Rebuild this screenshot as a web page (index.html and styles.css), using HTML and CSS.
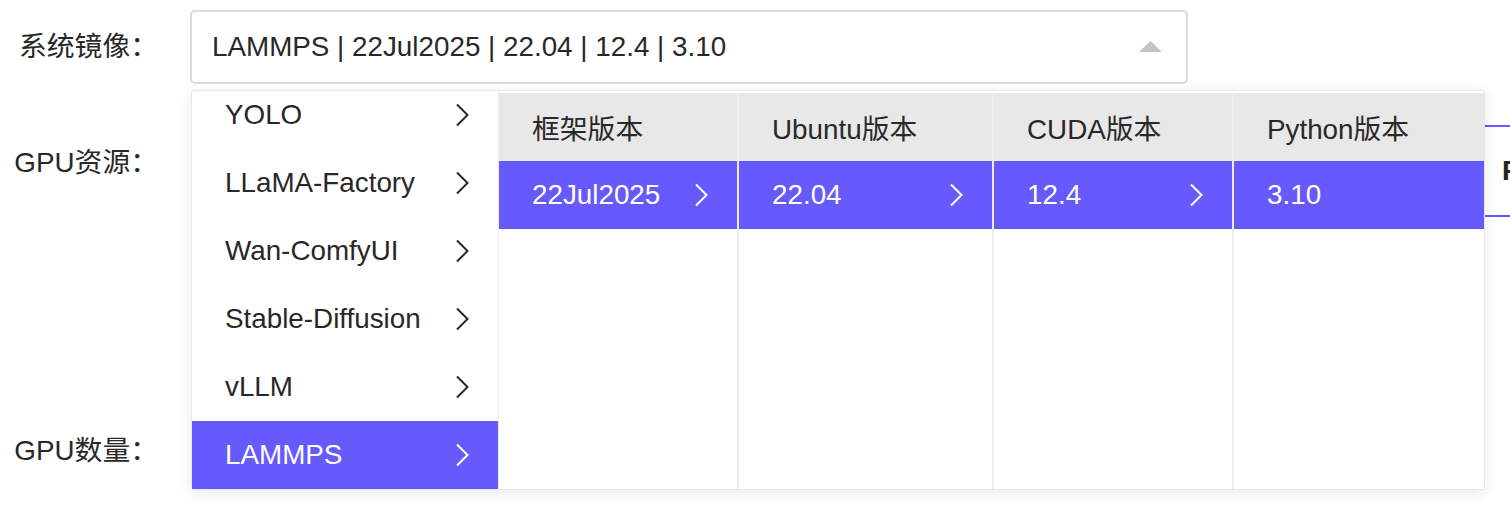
FILE: index.html
```html
<!DOCTYPE html>
<html lang="zh-CN">
<head>
<meta charset="utf-8">
<title>系统镜像</title>
<link rel="stylesheet" href="styles.css">
</head>
<body>
<div class="page">
  <div class="form-row row-image">
    <label class="label">系统镜像：</label>
    <div class="select-wrap">
      <div class="select">
        <span class="select-value">LAMMPS | 22Jul2025 | 22.04 | 12.4 | 3.10</span>
        <svg class="caret" width="23" height="11" viewBox="0 0 23 11"><polygon points="0,11 11.5,0 23,11"/></svg>
      </div>
      <div class="dropdown">
        <div class="menu">
          <div class="menu-item"><span>YOLO</span><svg class="chev" width="14" height="24" viewBox="0 0 14 24"><path d="M2 1.5 L12.5 12 L2 22.5"/></svg></div>
          <div class="menu-item"><span>LLaMA-Factory</span><svg class="chev" width="14" height="24" viewBox="0 0 14 24"><path d="M2 1.5 L12.5 12 L2 22.5"/></svg></div>
          <div class="menu-item"><span>Wan-ComfyUI</span><svg class="chev" width="14" height="24" viewBox="0 0 14 24"><path d="M2 1.5 L12.5 12 L2 22.5"/></svg></div>
          <div class="menu-item"><span>Stable-Diffusion</span><svg class="chev" width="14" height="24" viewBox="0 0 14 24"><path d="M2 1.5 L12.5 12 L2 22.5"/></svg></div>
          <div class="menu-item"><span>vLLM</span><svg class="chev" width="14" height="24" viewBox="0 0 14 24"><path d="M2 1.5 L12.5 12 L2 22.5"/></svg></div>
          <div class="menu-item active"><span>LAMMPS</span><svg class="chev" width="14" height="24" viewBox="0 0 14 24"><path d="M2 1.5 L12.5 12 L2 22.5"/></svg></div>
        </div>
        <div class="versions">
          <div class="vcol c1">
            <div class="vhead">框架版本</div>
            <div class="vcell active"><span>22Jul2025</span><svg class="chev" width="14" height="24" viewBox="0 0 14 24"><path d="M2 1.5 L12.5 12 L2 22.5"/></svg></div>
          </div>
          <div class="vcol c2">
            <div class="vhead">Ubuntu版本</div>
            <div class="vcell active"><span>22.04</span><svg class="chev" width="14" height="24" viewBox="0 0 14 24"><path d="M2 1.5 L12.5 12 L2 22.5"/></svg></div>
          </div>
          <div class="vcol c3">
            <div class="vhead">CUDA版本</div>
            <div class="vcell active"><span>12.4</span><svg class="chev" width="14" height="24" viewBox="0 0 14 24"><path d="M2 1.5 L12.5 12 L2 22.5"/></svg></div>
          </div>
          <div class="vcol c4">
            <div class="vhead">Python版本</div>
            <div class="vcell active"><span>3.10</span></div>
          </div>
        </div>
      </div>
    </div>
  </div>

  <div class="form-row row-gpu">
    <label class="label">GPU资源：</label>
    <div class="cards">
      <div class="card"></div>
      <div class="card"></div>
      <div class="card"></div>
      <div class="card"></div>
      <div class="card card-active">FP32</div>
    </div>
  </div>

  <div class="form-row row-count">
    <label class="label">GPU数量：</label>
    <div class="count"></div>
  </div>
</div>
</body>
</html>
```

FILE: styles.css
```css
html, body {
  margin: 0;
  padding: 0;
  background: #ffffff;
}

body {
  width: 1510px;
  height: 508px;
  overflow: hidden;
  font-family: "Liberation Sans", "Noto Sans CJK SC", sans-serif;
  font-size: 27.8px;
  color: #282828;
}

.page {
  padding-top: 10px;
}

.form-row {
  display: grid;
  grid-template-columns: 158px 1fr;
  column-gap: 32px;
  align-items: center;
}

.label {
  text-align: right;
  line-height: 40px;
  white-space: nowrap;
}

/* select */
.select-wrap {
  position: relative;
  width: 998px;
}

.select {
  box-sizing: border-box;
  height: 74px;
  border: 2px solid #dcdcdc;
  border-radius: 5px;
  display: flex;
  align-items: center;
  justify-content: space-between;
  padding: 0 24px 0 20px;
  background: #fff;
}

.select-value {
  white-space: nowrap;
}

.caret {
  fill: #c4c4c4;
  margin-top: -2px;
}

/* dropdown overlay */
.dropdown {
  position: absolute;
  top: calc(100% + 6px);
  left: 1px;
  width: 1294px;
  height: 400px;
  box-sizing: border-box;
  border: 1px solid #e8e8e8;
  border-radius: 3px;
  background: #fff;
  box-shadow: 0 3px 16px rgba(0, 0, 0, 0.09);
  display: flex;
  z-index: 10;
}

.menu {
  width: 306px;
  flex: 0 0 306px;
  border-right: 1px solid #ececec;
  display: flex;
  flex-direction: column;
  justify-content: flex-end;
  overflow: hidden;
}

.menu-item {
  flex: 0 0 68px;
  height: 68px;
  display: flex;
  align-items: center;
  justify-content: space-between;
  padding: 0 29px 0 33px;
  white-space: nowrap;
}

.menu-item.active {
  background: #675afc;
  color: #ffffff;
}

.chev {
  flex: 0 0 auto;
  fill: none;
  stroke: currentColor;
  stroke-width: 2;
}

.versions {
  flex: 1;
  display: flex;
  padding-top: 2px;
}

.vcol {
  box-sizing: border-box;
  border-right: 2px solid #eeeeee;
  display: flex;
  flex-direction: column;
}

.c1 { width: 240px; }
.c2 { width: 255px; }
.c3 { width: 240px; }
.c4 { flex: 1; border-right: none; }

.vhead {
  height: 68px;
  background: #e8e8e8;
  display: flex;
  align-items: center;
  padding-left: 33px;
  white-space: nowrap;
}

.vcell {
  height: 68px;
  display: flex;
  align-items: center;
  justify-content: space-between;
  padding: 0 29px 0 33px;
  white-space: nowrap;
}

.vcell.active {
  background: #675afc;
  color: #ffffff;
}

/* gpu resources */
.row-gpu {
  margin-top: 41px;
  align-items: start;
}

.row-gpu .label {
  margin-top: 18px;
}

.cards {
  display: flex;
  gap: 20.5px;
  margin-left: 6px;
}

.card {
  flex: 0 0 300px;
  box-sizing: border-box;
  height: 92px;
  border: 2px solid #e2e2e2;
  border-radius: 4px;
  padding-left: 22px;
  display: flex;
  align-items: center;
  font-weight: bold;
  color: #222;
  white-space: nowrap;
}

.card-active {
  border-color: #675afc;
}

/* gpu count */
.row-count {
  margin-top: 214px;
}

.count {
  height: 40px;
}
```
